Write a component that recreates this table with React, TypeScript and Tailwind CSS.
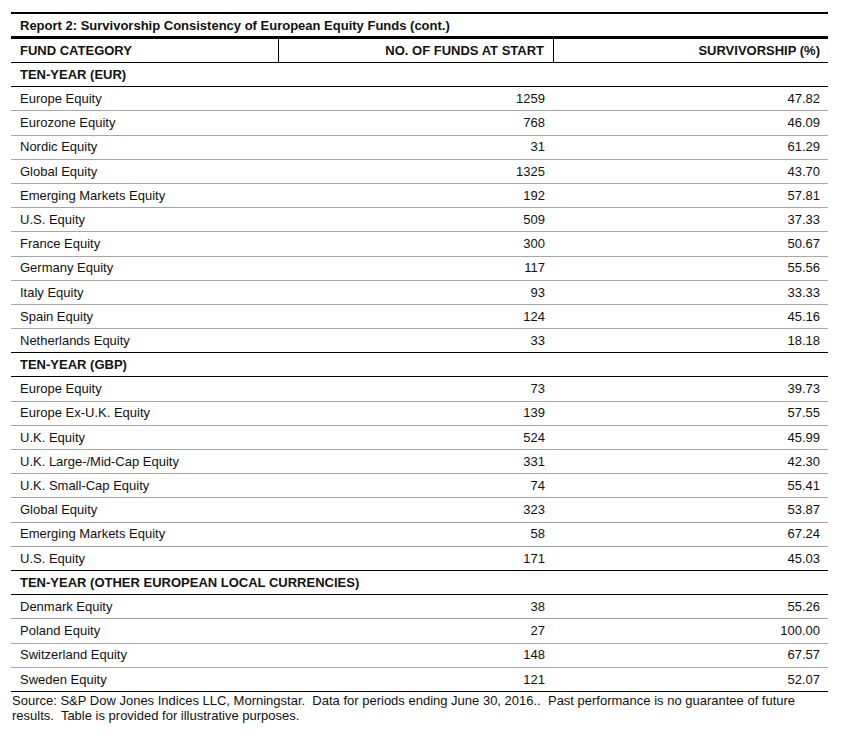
import React from "react";

type Row = [string, string, string];

const sections: { title: string; rows: Row[] }[] = [
  {
    title: "TEN-YEAR (EUR)",
    rows: [
      ["Europe Equity", "1259", "47.82"],
      ["Eurozone Equity", "768", "46.09"],
      ["Nordic Equity", "31", "61.29"],
      ["Global Equity", "1325", "43.70"],
      ["Emerging Markets Equity", "192", "57.81"],
      ["U.S. Equity", "509", "37.33"],
      ["France Equity", "300", "50.67"],
      ["Germany Equity", "117", "55.56"],
      ["Italy Equity", "93", "33.33"],
      ["Spain Equity", "124", "45.16"],
      ["Netherlands Equity", "33", "18.18"],
    ],
  },
  {
    title: "TEN-YEAR (GBP)",
    rows: [
      ["Europe Equity", "73", "39.73"],
      ["Europe Ex-U.K. Equity", "139", "57.55"],
      ["U.K. Equity", "524", "45.99"],
      ["U.K. Large-/Mid-Cap Equity", "331", "42.30"],
      ["U.K. Small-Cap Equity", "74", "55.41"],
      ["Global Equity", "323", "53.87"],
      ["Emerging Markets Equity", "58", "67.24"],
      ["U.S. Equity", "171", "45.03"],
    ],
  },
  {
    title: "TEN-YEAR (OTHER EUROPEAN LOCAL CURRENCIES)",
    rows: [
      ["Denmark Equity", "38", "55.26"],
      ["Poland Equity", "27", "100.00"],
      ["Switzerland Equity", "148", "67.57"],
      ["Sweden Equity", "121", "52.07"],
    ],
  },
];

export default function App() {
  return (
    <div
      className="w-[846px] h-[744px] bg-white text-[#111] pt-[12px] pl-[11px]"
      style={{ fontFamily: '"Liberation Sans", Arial, sans-serif' }}
    >
      <div className="w-[817px]">
        <div className="border-t-2 border-b-[3px] border-black h-[27px] flex items-center pl-[9px] pt-[1px] text-[13px] font-bold">
          Report 2: Survivorship Consistency of European Equity Funds (cont.)
        </div>
        <div className="grid grid-cols-[268px_275px_274px] h-[24px] border-b border-black text-[13px] font-bold">
          <div className="flex items-center pl-[9px] border-r border-black">FUND CATEGORY</div>
          <div className="flex items-center justify-end pr-[9px] border-r border-black">
            NO. OF FUNDS AT START
          </div>
          <div className="flex items-center justify-end pr-[8px]">SURVIVORSHIP (%)</div>
        </div>
        {sections.map((s, si) => (
          <div key={si}>
            <div className="h-[24.2px] flex items-center pl-[9px] border-b border-black text-[13px] font-bold">
              {s.title}
            </div>
            {s.rows.map((r, i) => (
              <div
                key={i}
                className={
                  i === s.rows.length - 1
                    ? "grid grid-cols-[268px_275px_274px] h-[24.2px] border-b border-black text-[13px]"
                    : "grid grid-cols-[268px_275px_274px] h-[24.2px] border-b border-[#a6a6a6] text-[13px]"
                }
              >
                <div className="flex items-center pl-[9px]">{r[0]}</div>
                <div className="flex items-center justify-end pr-[9px]">{r[1]}</div>
                <div className="flex items-center justify-end pr-[8px]">{r[2]}</div>
              </div>
            ))}
          </div>
        ))}
        <div className="pl-[1px] pt-[1px] text-[13px] leading-[15px] w-[810px]">
          Source: S&amp;P Dow Jones Indices LLC, Morningstar.&nbsp; Data for periods ending June 30, 2016..&nbsp; Past
          performance is no guarantee of future results.&nbsp; Table is provided for illustrative purposes.
        </div>
      </div>
    </div>
  );
}
